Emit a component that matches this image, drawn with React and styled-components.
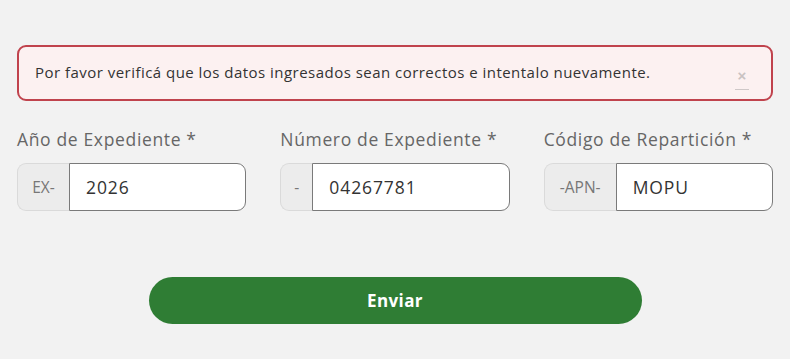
import styled, { createGlobalStyle } from "styled-components"

const Global = createGlobalStyle`
  html, body {
    margin: 0;
    background: #f2f2f2;
    font-family: "Open Sans", "Noto Sans", sans-serif;
  }
  * { box-sizing: border-box; }
`

const Page = styled.div`
  padding: 45px 17px 0;
  display: flex;
  flex-direction: column;
`

const Alert = styled.div`
  height: 56px;
  border: 2px solid #c0434d;
  border-radius: 9px;
  background: #fcf1f1;
  display: flex;
  align-items: center;
  padding: 0 16px 3px;
  color: #333;
  font-size: 15px;
  letter-spacing: 0.47px;
`

const AlertText = styled.span`
  flex: 1;
`

const Close = styled.button`
  border: none;
  background: none;
  padding: 0;
  margin-right: 6px;
  display: flex;
  flex-direction: column;
  align-items: center;
  color: #c9c2c2;
  font-size: 15px;
  line-height: 1;
  font-family: "Liberation Sans", sans-serif;
  font-weight: bold;
  margin-top: 14px;

  &::after {
    content: "";
    width: 14px;
    height: 1px;
    margin-top: 6px;
    background: #cfc8c8;
  }
`

const Fields = styled.div`
  display: grid;
  grid-template-columns: repeat(3, minmax(0, 1fr));
  column-gap: 34px;
  margin-top: 26px;
`

const Field = styled.div`
  display: flex;
  flex-direction: column;
  min-width: 0;
`

const Label = styled.label`
  font-size: 17.5px;
  color: #666;
  letter-spacing: 0.65px;
  height: 24px;
  line-height: 24px;
  white-space: nowrap;
`

const Group = styled.div`
  display: flex;
  height: 48px;
  margin-top: 12px;
`

const Prefix = styled.span`
  width: ${p => p.$w}px;
  flex: none;
  display: flex;
  align-items: center;
  justify-content: center;
  background: #ececec;
  border: 1px solid #dadada;
  border-right: none;
  border-radius: 9px 0 0 9px;
  color: #777;
  font-size: 15.5px;
`

const Input = styled.input`
  flex: 1;
  min-width: 0;
  width: 0;
  border: 1px solid #7a7a7a;
  border-radius: 0 9px 9px 0;
  background: #fff;
  padding: 0 16px;
  font: inherit;
  font-size: 17.5px;
  letter-spacing: 0.9px;
  color: #333;
  outline: none;
`

const Submit = styled.button`
  align-self: center;
  width: 493px;
  height: 47px;
  margin-top: 66px;
  border: none;
  border-radius: 24px;
  background: #2f7d34;
  color: #fff;
  font: inherit;
  font-size: 17px;
  font-weight: 700;
  letter-spacing: 0.4px;
`

const fields = [
  { label: "Año de Expediente *", prefix: "EX-", w: 52, value: "2026" },
  { label: "Número de Expediente *", prefix: "-", w: 32, value: "04267781" },
  { label: "Código de Repartición *", prefix: "-APN-", w: 72, value: "MOPU" },
]

export default function App() {
  return (
    <Page>
      <Global />
      <Alert>
        <AlertText>Por favor verificá que los datos ingresados sean correctos e intentalo nuevamente.</AlertText>
        <Close aria-label="Cerrar">×</Close>
      </Alert>
      <Fields>
        {fields.map(f => (
          <Field key={f.label}>
            <Label>{f.label}</Label>
            <Group>
              <Prefix $w={f.w}>{f.prefix}</Prefix>
              <Input defaultValue={f.value} />
            </Group>
          </Field>
        ))}
      </Fields>
      <Submit>Enviar</Submit>
    </Page>
  )
}
